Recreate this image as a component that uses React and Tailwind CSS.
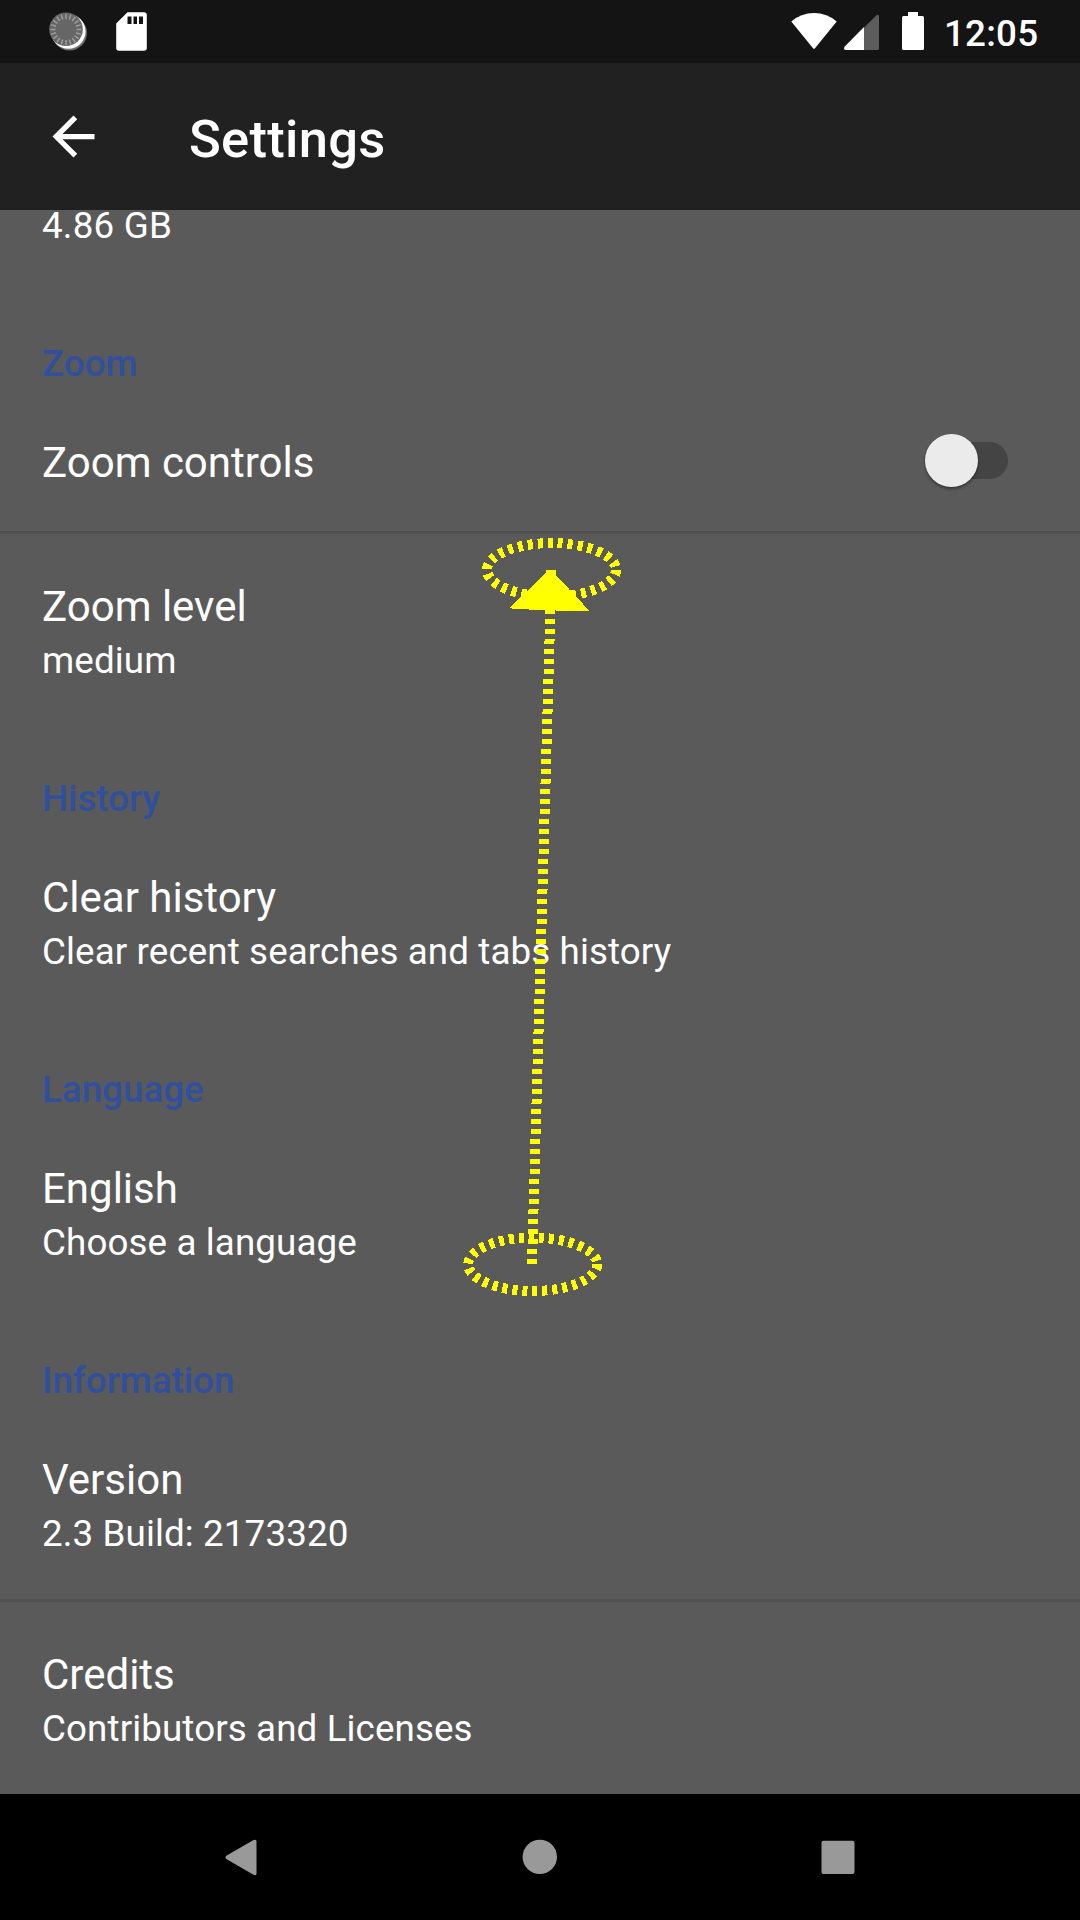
import React from "react";

const ticks = Array.from({ length: 20 }, (_, i) => i * 18);

function StatusBar() {
  return (
    <div className="flex h-[63px] shrink-0 items-start justify-between bg-[#141414]">
      <div className="flex">
        <svg className="ml-[48px] mt-[11px]" width="42" height="42" viewBox="48 11 42 42">
          <circle cx="69.5" cy="33" r="17.5" fill="#6d706d" />
          <circle cx="68.3" cy="31.5" r="17.3" fill="#ffffff" />
          <circle cx="66" cy="29.3" r="16.8" fill="#666666" />
          {ticks.map((a) => (
            <line key={a} x1="66" y1="13.800" x2="66" y2="19" stroke="#9c9c9c" strokeWidth="1.5" transform={`rotate(${a} 66 29.5)`} />
          ))}
        </svg>
        <svg className="ml-[24px] mt-[10px]" width="36" height="42" viewBox="114 10 36 42">
          <path fillRule="evenodd" fill="#fff" d="M127.500 12.300H144a2.800 2.800 0 0 1 2.800 2.800V48a2.800 2.800 0 0 1-2.800 2.800H119a2.800 2.800 0 0 1-2.800-2.800V23.500ZM127.500 16.500V24H131.500V16.500ZM133.500 16.500V24H137V16.500ZM139 16.500V24H143V16.500Z" />
        </svg>
      </div>
      <div className="flex">
        <svg width="150" height="63" viewBox="784 0 150 63" fill="#fff">
          <path d="M791.300 21.500Q801 13 814 13T836.700 21.500L815 48.200Q814 49.400 813 48.200Z" />
          <path fill="#5c5c5c" d="M864 27.500L876.500 15.200Q879 14 879 17V48.500Q879 50 877.500 50H864Z" />
          <path d="M864 27L844.500 46.700Q843 50 846 50H864Z" />
          <path d="M908 12H918V16H922.500Q924 16 924 17.500V48.500Q924 50 922.500 50H903.500Q902 50 902 48.500V17.500Q902 16 903.500 16H908Z" />
        </svg>
        <span className="mr-[42px] mt-[12px] w-[104px] pl-[10px] text-[36.75px] leading-[43px] font-medium whitespace-nowrap tracking-[0.2px]">12:05</span>
      </div>
    </div>
  );
}

function Toolbar() {
  return (
    <header className="flex h-[147px] shrink-0 items-center bg-[#212121]">
      <svg className="ml-[42px] mb-[1px]" width="63" height="63" viewBox="0 0 24 24" fill="#fff">
        <path d="M20 11H7.830l5.590-5.590L12 4l-8 8 8 8 1.410-1.410L7.830 13H20v-2z" />
      </svg>
      <h1 className="ml-[84px] mt-[4px] text-[52.5px] leading-[62px] font-medium tracking-[0.3px]">Settings</h1>
    </header>
  );
}

function Category({ children }) {
  return <h2 className="h-[96px] px-[42px] pt-[51px] text-[36.75px] leading-[43px] font-medium text-[#304f9e]">{children}</h2>;
}

function Row({ title, summary, divided }) {
  return (
    <div className={divided ? "h-[195px] border-t-[3px] border-[#505050] px-[42px] pt-[48px]" : "h-[195px] px-[42px] pt-[51px]"}>
      <div className="text-[42px] leading-[49px]">{title}</div>
      <div className="mt-[8px] text-[36.75px] leading-[43px] tracking-[0.11px]">{summary}</div>
    </div>
  );
}

function SwitchRow({ title }) {
  return (
    <div className="flex h-[144px] items-start justify-between px-[42px] pt-[51px]">
      <div className="text-[42px] leading-[49px]">{title}</div>
      <div className="mr-[30px] mt-[4px] flex h-[37px] w-[75px] items-center rounded-full bg-[#444444]">
        <div className="-ml-[8px] size-[53px] shrink-0 rounded-full bg-[#ebebeb] shadow-[0_2px_3px_rgba(0,0,0,0.4)]" />
      </div>
    </div>
  );
}

function SwipeTrace() {
  return (
    <svg className="pointer-events-none absolute inset-0" width="1080" height="1920" fill="none" stroke="#ffff00" strokeWidth="10" strokeDasharray="5 5" shapeRendering="crispEdges">
      <ellipse cx="532.7" cy="1264.3" rx="64.5" ry="26.7" />
      <ellipse cx="551.5" cy="569.8" rx="64.5" ry="26.7" />
      <line x1="532" y1="1264" x2="551.5" y2="570" />
      <path stroke="none" fill="#ffff00" d="M509.500 608L546 573V570H556V575L589.500 611H569L515 609Z" />
    </svg>
  );
}

function NavBar() {
  return (
    <nav className="flex h-[126px] shrink-0 items-center justify-between bg-black px-[210px]">
      <svg width="63" height="63" viewBox="210 1825.5 63 63" fill="#999">
        <path d="M226.300 1855.200L253.500 1839.500Q256.500 1838.500 256.500 1841V1873Q256.500 1875.500 253.500 1874.200L226.300 1858.600Q224.500 1857 226.300 1855.200Z" />
      </svg>
      <svg width="63" height="63" viewBox="508.5 1825.5 63 63" fill="#999">
        <circle cx="539.3" cy="1856.400" r="17.200" />
      </svg>
      <svg width="63" height="63" viewBox="807 1825.5 63 63" fill="#999">
        <rect x="821.5" y="1840.300" width="33" height="33.200" rx="2" />
      </svg>
    </nav>
  );
}

export default function App() {
  return (
    <div className="relative flex h-[1920px] w-[1080px] flex-col overflow-hidden bg-[#5a5a5a] font-['Roboto',sans-serif] text-white">
      <StatusBar />
      <Toolbar />
      <main className="h-[1584px] shrink-0 overflow-hidden">
        <div className="h-[81px] px-[42px] text-[36.75px] leading-[31px] tracking-[0.2px]">4.86 GB</div>
        <Category>Zoom</Category>
        <SwitchRow title="Zoom controls" />
        <Row divided title="Zoom level" summary="medium" />
        <Category>History</Category>
        <Row title="Clear history" summary="Clear recent searches and tabs history" />
        <Category>Language</Category>
        <Row title="English" summary="Choose a language" />
        <Category>Information</Category>
        <Row title="Version" summary="2.3 Build: 2173320" />
        <Row divided title="Credits" summary="Contributors and Licenses" />
      </main>
      <NavBar />
      <SwipeTrace />
    </div>
  );
}
